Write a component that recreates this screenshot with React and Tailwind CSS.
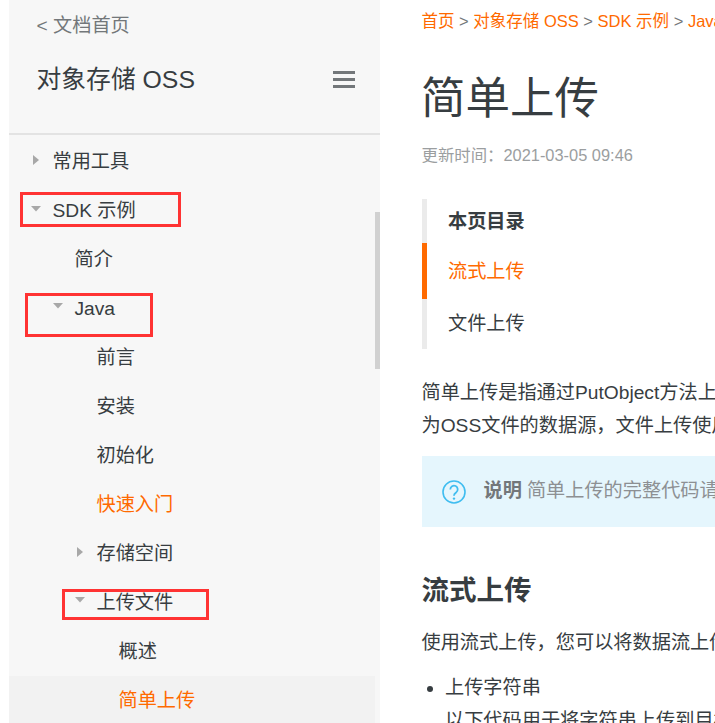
function Tri({ dir, className }) {
  return (
    <svg width="12" height="12" viewBox="0 0 12 12" className={className}>
      {dir === "right" ? <path d="M3 1 L9 6 L3 11 Z" fill="#a8a8a8" /> : <path d="M1 3 L11 3 L6 8.5 Z" fill="#a8a8a8" />}
    </svg>
  );
}
function Row({ indent, tri, active, current, children }) {
  return (
    <div className={`relative flex h-[49px] shrink-0 items-center text-[19.2px] ${current ? "bg-[#f2f2f2] w-[366px]" : ""} ${active || current ? "text-[#ff6a00]" : "text-[#373d41]"}`}>
      <span className="flex items-center pt-[2px]" style={{ marginLeft: indent }}>
        {children}
      </span>
      {tri}
    </div>
  );
}
function Box({ className }) {
  return <div className={`absolute border-[3px] border-[#ff3333] ${className}`} />;
}
function Sep() {
  return <span className="text-[#73777a]"> &gt; </span>;
}
export default function App() {
  return (
    <div className="flex h-[723px] w-[715px] overflow-hidden bg-white font-['Liberation_Sans','Noto_Sans_CJK_SC',sans-serif]">
      <aside className="relative ml-[9px] flex h-[723px] w-[371px] shrink-0 flex-col overflow-hidden bg-[#f7f7f7]">
        <div className="h-[135px] shrink-0 border-b-2 border-[#e3e3e3] pl-[27.5px]">
          <div className="pt-[12px] text-[19.2px] leading-[28px] text-[#73777a]">&lt; 文档首页</div>
          <div className="mt-[20px] flex items-center justify-between pr-[25px]">
            <span className="pt-[1px] text-[24.8px] leading-[38px] text-[#373d41]">对象存储 OSS</span>
            <span className="flex w-[22px] flex-col gap-[4px]">
              <span className="h-[3px] bg-[#73777a]" />
              <span className="h-[3px] bg-[#73777a]" />
              <span className="h-[3px] bg-[#73777a]" />
            </span>
          </div>
        </div>
        <div className="flex flex-col pt-[2px]">
          <Row indent={43.5} tri={<Tri dir="right" className="absolute left-[21px] top-[17px]" />}>常用工具</Row>
          <Row indent={43.5} tri={<Tri dir="down" className="absolute left-[21px] top-[17px]" />}>SDK 示例</Row>
          <Row indent={65.5}>简介</Row>
          <Row indent={65.5} tri={<Tri dir="down" className="absolute left-[43px] top-[16px]" />}>Java</Row>
          <Row indent={87.5}>前言</Row>
          <Row indent={87.5}>安装</Row>
          <Row indent={87.5}>初始化</Row>
          <Row indent={87.5} active>快速入门</Row>
          <Row indent={87.5} tri={<Tri dir="right" className="absolute left-[65px] top-[17px]" />}>存储空间</Row>
          <Row indent={87.5} tri={<Tri dir="down" className="absolute left-[65px] top-[16px]" />}>上传文件</Row>
          <Row indent={109.5}>概述</Row>
          <Row indent={109.5} current>简单上传</Row>
        </div>
        <div className="absolute right-0 top-[212px] h-[157px] w-[5px] bg-[#d1d1d1]" />
        <Box className="left-[11px] top-[192px] h-[35px] w-[161px]" />
        <Box className="left-[16px] top-[293px] h-[44px] w-[128px]" />
        <Box className="left-[53px] top-[589px] h-[31px] w-[147px]" />
      </aside>
      <main className="ml-[42px] w-[600px] shrink-0 whitespace-nowrap text-[19.2px] text-[#373d41]">
        <div className="ml-[-0.5px] pt-[9px] text-[16.5px] leading-[24px] text-[#ff6a00]">
          首页<Sep />对象存储 OSS<Sep />SDK 示例<Sep />Java<Sep />上传文件
        </div>
        <h1 className="ml-[-1px] mt-[36px] text-[44.5px] leading-[60px]">简单上传</h1>
        <div className="ml-[-0.5px] mt-[14px] text-[16.4px] leading-[24px] text-[#9b9ea0]">{"更新时间\uFF1A2021-03-05 09:46"}</div>
        <div className="relative mt-[32px] h-[150px] border-l-[5px] border-[#ebebeb] pl-[21px]">
          <div className="absolute left-[-5px] top-[44px] h-[56px] w-[5px] bg-[#ff6a00]" />
          <div className="flex h-[44px] items-center pt-[2px] font-bold">本页目录</div>
          <div className="flex h-[56px] items-center pt-[2px] text-[#ff6a00]">流式上传</div>
          <div className="flex h-[50px] items-center">文件上传</div>
        </div>
        <p className="ml-[-0.5px] mt-[27px] leading-[33px]">简单上传是指通过PutObject方法上传单个文件。<br />{"为OSS文件的数据源\uFF0C文件上传使用本地文件作为数据源。"}</p>
        <div className="mt-[14px] flex h-[71px] items-center bg-[#e5f6fd] pl-[20px]">
          <svg width="24" height="24" viewBox="0 0 24 24" className="shrink-0">
            <circle cx="12" cy="12" r="11" fill="none" stroke="#3fbdf0" strokeWidth="1.6" />
            <path d="M8.3 9.4a3.7 3.7 0 1 1 5.8 3c-1.3.9-2.1 1.5-2.1 3v.4" fill="none" stroke="#3fbdf0" strokeWidth="1.8" />
            <circle cx="12" cy="18.6" r="1.2" fill="#3fbdf0" />
          </svg>
          <span className="ml-[17.5px] font-bold text-[#73777a]">说明</span>
          <span className="ml-[5px] text-[#8d9093]">简单上传的完整代码请参见GitHub。</span>
        </div>
        <h2 className="ml-[-0.5px] mt-[44px] text-[27.5px] font-bold leading-[40px]">流式上传</h2>
        <p className="ml-[-0.5px] mt-[15px] leading-[33px]">{"使用流式上传\uFF0C您可以将数据流上传到目标存储空间。"}</p>
        <ul className="mt-[12px] list-disc pl-[23px] leading-[33px]">
          <li>上传字符串<br />以下代码用于将字符串上传到目标存储空间</li>
        </ul>
      </main>
    </div>
  );
}
